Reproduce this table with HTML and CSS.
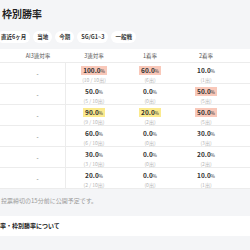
FILE: index.html
```html
<!DOCTYPE html>
<html lang="ja">
<head>
<meta charset="utf-8">
<link rel="stylesheet" href="styles.css">
</head>
<body>
<div class="page">
  <h1 class="title">枠別勝率</h1>
  <div class="chips">
    <span class="chip">直近6ヶ月</span>
    <span class="chip">当地</span>
    <span class="chip">今期</span>
    <span class="chip">SG/G1~3</span>
    <span class="chip">一般戦</span>
  </div>
  <div class="table">
    <div class="row head">
      <div class="cell">AI3連対率</div>
      <div class="cell">3連対率</div>
      <div class="cell">1着率</div>
      <div class="cell">2着率</div>
    </div>
    <div class="row">
      <div class="cell ai">-</div>
      <div class="cell"><span class="pct hl-red">100.0<small>%</small></span><span class="sub">(10 / 10出)</span></div>
      <div class="cell"><span class="pct hl-red">60.0<small>%</small></span><span class="sub">(6出)</span></div>
      <div class="cell"><span class="pct">10.0<small>%</small></span><span class="sub">(1出)</span></div>
    </div>
    <div class="row">
      <div class="cell ai">-</div>
      <div class="cell"><span class="pct">50.0<small>%</small></span><span class="sub">(5 / 10出)</span></div>
      <div class="cell"><span class="pct">0.0<small>%</small></span><span class="sub">(0出)</span></div>
      <div class="cell"><span class="pct hl-red">50.0<small>%</small></span><span class="sub">(5出)</span></div>
    </div>
    <div class="row">
      <div class="cell ai">-</div>
      <div class="cell"><span class="pct hl-yel">90.0<small>%</small></span><span class="sub">(9 / 10出)</span></div>
      <div class="cell"><span class="pct hl-yel">20.0<small>%</small></span><span class="sub">(2出)</span></div>
      <div class="cell"><span class="pct hl-red">50.0<small>%</small></span><span class="sub">(5出)</span></div>
    </div>
    <div class="row">
      <div class="cell ai">-</div>
      <div class="cell"><span class="pct">60.0<small>%</small></span><span class="sub">(6 / 10出)</span></div>
      <div class="cell"><span class="pct">0.0<small>%</small></span><span class="sub">(0出)</span></div>
      <div class="cell"><span class="pct">30.0<small>%</small></span><span class="sub">(3出)</span></div>
    </div>
    <div class="row">
      <div class="cell ai">-</div>
      <div class="cell"><span class="pct">30.0<small>%</small></span><span class="sub">(3 / 10出)</span></div>
      <div class="cell"><span class="pct">0.0<small>%</small></span><span class="sub">(0出)</span></div>
      <div class="cell"><span class="pct">20.0<small>%</small></span><span class="sub">(2出)</span></div>
    </div>
    <div class="row">
      <div class="cell ai">-</div>
      <div class="cell"><span class="pct">20.0<small>%</small></span><span class="sub">(2 / 10出)</span></div>
      <div class="cell"><span class="pct">0.0<small>%</small></span><span class="sub">(0出)</span></div>
      <div class="cell"><span class="pct">10.0<small>%</small></span><span class="sub">(1出)</span></div>
    </div>
  </div>
  <p class="note">投票締切の15分前に公開予定です。</p>
  <div class="link">勝率・枠別勝率について</div>
</div>
</body>
</html>
```
FILE: styles.css
```css
html, body {
  margin: 0;
  padding: 0;
}
body {
  width: 250px;
  height: 250px;
  overflow: hidden;
  background: #f4f5f7;
  font-family: "Noto Sans CJK JP", "Noto Sans", sans-serif;
  color: #222;
}
.page {
  display: flex;
  flex-direction: column;
}
.title {
  margin: 0;
  padding: 7px 0 0 2px;
  font-size: 10px;
  line-height: 14px;
  font-weight: 700;
  color: #1f1f1f;
}
.chips {
  display: flex;
  gap: 3px;
  margin: 10px 0 0 -3px;
}
.chip {
  height: 12px;
  line-height: 12px;
  padding: 0 4px;
  background: #fff;
  border-radius: 6px;
  font-size: 5.5px;
  font-weight: 700;
  color: #333;
  white-space: nowrap;
}
.table {
  margin-top: 6px;
  background: #fff;
}
.row {
  display: grid;
  grid-template-columns: 56px 56px 56px 56px;
  padding-left: 10px;
  height: 20px;
  border-bottom: 1px solid #ececec;
}
.row.head {
  height: 13px;
}
.head .cell {
  justify-content: center;
  font-size: 5.5px;
  color: #555;
}
.cell {
  display: flex;
  flex-direction: column;
  align-items: center;
  padding-top: 3px;
  box-sizing: border-box;
}
.head .cell {
  padding-top: 0;
}
.cell.ai {
  justify-content: center;
  padding-top: 0;
  border-right: 1px solid #ececec;
  font-size: 6px;
  color: #555;
}
.pct {
  font-size: 6.5px;
  line-height: 8px;
  font-weight: 700;
  color: #333;
  padding: 0 2px;
}
.pct small {
  font-size: 4.5px;
  font-weight: 400;
}
.hl-red {
  background: #f9c8b9;
}
.hl-yel {
  background: #fbea8e;
}
.sub {
  margin-top: 1px;
  font-size: 5px;
  line-height: 7px;
  color: #b5b5b5;
  white-space: nowrap;
}
.note {
  margin: 7px 0 0 1px;
  font-size: 6px;
  line-height: 10px;
  color: #9a9a9a;
}
.link {
  margin-top: 10px;
  height: 20px;
  line-height: 20px;
  background: #fff;
  font-size: 6px;
  font-weight: 700;
  color: #222;
  text-indent: -6px;
}
```
